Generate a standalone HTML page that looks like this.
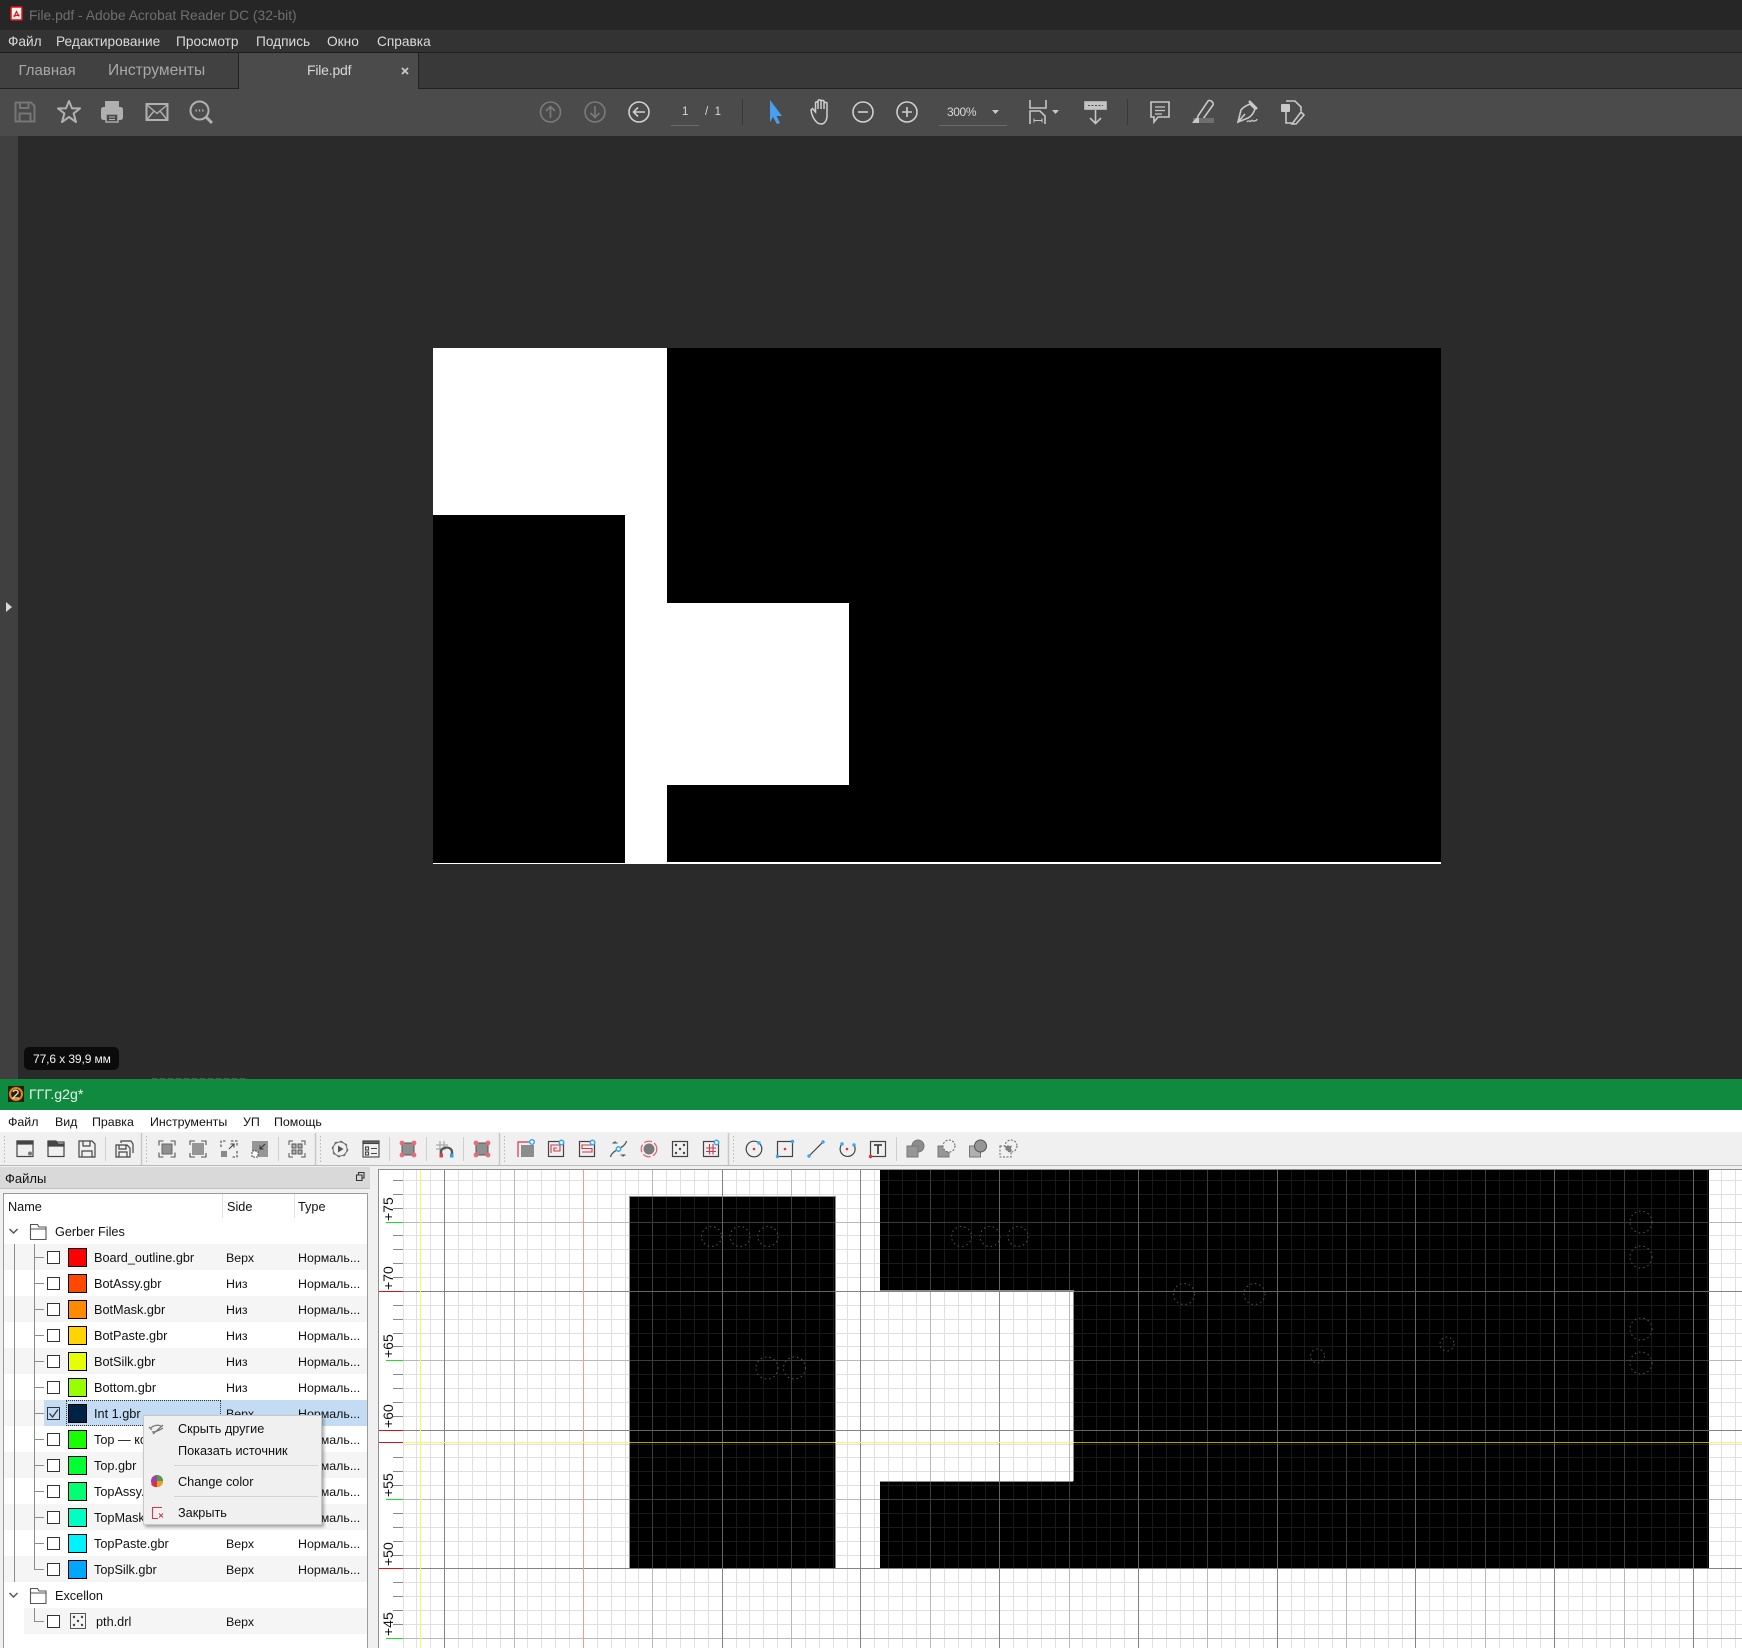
<!DOCTYPE html>
<html lang="ru"><head><meta charset="utf-8"><title>File.pdf</title>
<style>
html,body{margin:0;padding:0;background:#2a2a2a}
#p{position:relative;width:1742px;height:1648px;overflow:hidden;font-family:"Liberation Sans","Noto Sans CJK SC",sans-serif;background:#2a2a2a}
.b{position:absolute}
.t{position:absolute;white-space:nowrap;line-height:16px;height:16px;font-size:12.5px;color:#111}
.m{font-size:13.7px;color:#dadada}
.k{font-size:12.4px;color:#111}
.g{font-size:12.7px;color:#111}
svg{position:absolute;left:0;top:0}
</style></head><body><div id="p">
<!-- Acrobat chrome -->
<div class="b" style="left:0;top:0;width:1742px;height:30px;background:#262626"></div>
<div class="b" style="left:0;top:30px;width:1742px;height:22px;background:#333"></div>
<div class="b" style="left:0;top:52px;width:1742px;height:1px;background:#1e1e1e"></div>
<div class="b" style="left:0;top:53px;width:1742px;height:35px;background:#393939"></div>
<div class="b" style="left:0;top:53px;width:239px;height:35px;background:#414141"></div>
<div class="b" style="left:0;top:88px;width:1742px;height:1px;background:#222"></div>
<div class="b" style="left:0;top:89px;width:1742px;height:47px;background:#4b4b4b"></div>
<div class="b" style="left:238px;top:53px;width:181px;height:36px;background:#4b4b4b;border-left:1px solid #222;border-right:1px solid #222;box-sizing:border-box"></div>
<div class="b" style="left:0;top:136px;width:18px;height:943px;background:#404040"></div>
<!-- PDF page -->
<div class="b" style="left:433px;top:348px;width:1008px;height:516px;background:#fff"></div>
<div class="b" style="left:667px;top:348px;width:774px;height:255px;background:#000"></div>
<div class="b" style="left:849px;top:603px;width:592px;height:182px;background:#000"></div>
<div class="b" style="left:667px;top:785px;width:774px;height:77px;background:#000"></div>
<div class="b" style="left:433px;top:515px;width:192px;height:348px;background:#000"></div>
<!-- tooltip -->
<div class="b" style="left:24px;top:1047px;width:95px;height:23px;background:#0b0b0b;border-radius:5px"></div>
<div class="b" style="left:152px;top:1078px;width:96px;height:1px;background:repeating-linear-gradient(90deg,#555 0 5px,#333 5px 8px)"></div>
<!-- Lower app -->
<div class="b" style="left:0;top:1079px;width:1742px;height:31px;background:#0f8a3f"></div>
<div class="b" style="left:0;top:1110px;width:1742px;height:22px;background:#fff"></div>
<div class="b" style="left:0;top:1132px;width:1742px;height:516px;background:#f0f0f0"></div>
<div class="b" style="left:0;top:1165px;width:1742px;height:1px;background:#b9b9b9"></div>
<div class="b" style="left:0;top:1167px;width:370px;height:21px;background:#d9d9d9;border-bottom:1px solid #c4c4c4"></div>
<div class="b" style="left:3px;top:1193px;width:365px;height:455px;background:#fff;border:1px solid #9a9a9a;border-bottom:0;box-sizing:border-box"></div>
<!-- table rows -->
<div class="b" style="left:4px;top:1244px;width:363px;height:26px;background:#f5f5f5"></div>
<div class="b" style="left:4px;top:1296px;width:363px;height:26px;background:#f5f5f5"></div>
<div class="b" style="left:4px;top:1348px;width:363px;height:26px;background:#f5f5f5"></div>
<div class="b" style="left:4px;top:1400px;width:40px;height:26px;background:#f5f5f5"></div>
<div class="b" style="left:44px;top:1400px;width:323px;height:26px;background:#c4dcf3"></div>
<div class="b" style="left:66px;top:1400px;width:155px;height:26px;border:1px dotted #333;box-sizing:border-box"></div>
<div class="b" style="left:4px;top:1452px;width:363px;height:26px;background:#f5f5f5"></div>
<div class="b" style="left:4px;top:1504px;width:363px;height:26px;background:#f5f5f5"></div>
<div class="b" style="left:4px;top:1556px;width:363px;height:26px;background:#f5f5f5"></div>
<div class="b" style="left:24px;top:1608px;width:343px;height:26px;background:#f5f5f5"></div>

<svg width="1742" height="1648" viewBox="0 0 1742 1648" xmlns="http://www.w3.org/2000/svg">
<defs>
<path id="minor" d="M403.5 1170v478M416.5 1170v478M430.5 1170v478M444.5 1170v478M458.5 1170v478M472.5 1170v478M486.5 1170v478M500.5 1170v478M514.5 1170v478M527.5 1170v478M541.5 1170v478M555.5 1170v478M569.5 1170v478M583.5 1170v478M597.5 1170v478M611.5 1170v478M625.5 1170v478M638.5 1170v478M652.5 1170v478M666.5 1170v478M680.5 1170v478M694.5 1170v478M708.5 1170v478M722.5 1170v478M736.5 1170v478M749.5 1170v478M763.5 1170v478M777.5 1170v478M791.5 1170v478M805.5 1170v478M819.5 1170v478M833.5 1170v478M847.5 1170v478M860.5 1170v478M874.5 1170v478M888.5 1170v478M902.5 1170v478M916.5 1170v478M930.5 1170v478M944.5 1170v478M958.5 1170v478M971.5 1170v478M985.5 1170v478M999.5 1170v478M1013.5 1170v478M1027.5 1170v478M1041.5 1170v478M1055.5 1170v478M1069.5 1170v478M1082.5 1170v478M1096.5 1170v478M1110.5 1170v478M1124.5 1170v478M1138.5 1170v478M1152.5 1170v478M1166.5 1170v478M1180.5 1170v478M1193.5 1170v478M1207.5 1170v478M1221.5 1170v478M1235.5 1170v478M1249.5 1170v478M1263.5 1170v478M1277.5 1170v478M1291.5 1170v478M1304.5 1170v478M1318.5 1170v478M1332.5 1170v478M1346.5 1170v478M1360.5 1170v478M1374.5 1170v478M1388.5 1170v478M1402.5 1170v478M1415.5 1170v478M1429.5 1170v478M1443.5 1170v478M1457.5 1170v478M1471.5 1170v478M1485.5 1170v478M1499.5 1170v478M1513.5 1170v478M1526.5 1170v478M1540.5 1170v478M1554.5 1170v478M1568.5 1170v478M1582.5 1170v478M1596.5 1170v478M1610.5 1170v478M1624.5 1170v478M1637.5 1170v478M1651.5 1170v478M1665.5 1170v478M1679.5 1170v478M1693.5 1170v478M1707.5 1170v478M1721.5 1170v478M1735.5 1170v478M403 1180.5H1742M403 1194.5H1742M403 1208.5H1742M403 1222.5H1742M403 1235.5H1742M403 1249.5H1742M403 1263.5H1742M403 1277.5H1742M403 1291.5H1742M403 1305.5H1742M403 1319.5H1742M403 1333.5H1742M403 1346.5H1742M403 1360.5H1742M403 1374.5H1742M403 1388.5H1742M403 1402.5H1742M403 1416.5H1742M403 1430.5H1742M403 1444.5H1742M403 1457.5H1742M403 1471.5H1742M403 1485.5H1742M403 1499.5H1742M403 1513.5H1742M403 1527.5H1742M403 1541.5H1742M403 1555.5H1742M403 1568.5H1742M403 1582.5H1742M403 1596.5H1742M403 1610.5H1742M403 1624.5H1742M403 1638.5H1742"/>
<path id="med" d="M514.5 1170v478M652.5 1170v478M791.5 1170v478M930.5 1170v478M1069.5 1170v478M1207.5 1170v478M1346.5 1170v478M1485.5 1170v478M1624.5 1170v478M403 1222.5H1742M403 1360.5H1742M403 1499.5H1742M403 1638.5H1742"/>
<path id="dark" d="M444.5 1170v478M722.5 1170v478M860.5 1170v478M999.5 1170v478M1138.5 1170v478M1277.5 1170v478M1415.5 1170v478M1554.5 1170v478M1693.5 1170v478M403 1291.5H1742M403 1430.5H1742M403 1568.5H1742"/>
<clipPath id="blk"><path d="M630 1196H835V1568H630ZM880 1170H1709V1568H880V1481H1073V1290H880Z"/></clipPath>
</defs>

<!-- canvas -->
<rect x="379" y="1170" width="1363" height="478" fill="#fff"/>
<g shape-rendering="crispEdges" fill="none">
<use href="#minor" stroke="#e0e0e0"/>
<use href="#med" stroke="#bababa"/>
<use href="#dark" stroke="#838383"/>
<path d="M583.5 1170v478" stroke="#f19a9a"/>
<path d="M630 1196H835V1568H630ZM880 1170H1709V1568H880V1481H1073V1290H880Z" fill="#000"/>
<g clip-path="url(#blk)">
<use href="#minor" stroke="#191919"/>
<use href="#med" stroke="#3c3c3c"/>
<use href="#dark" stroke="#646464"/>
</g>
<path d="M630 1196.5H835M629.5 1196V1568M880 1290.5H1073.5V1481M1073 1481.5H880M835.5 1196V1568" stroke="#8c8c8c"/>
<path d="M420.5 1170V1648" stroke="#f8f85e"/>
<path d="M403 1442.5H1742" stroke="#f8f85e"/>
<path d="M630 1442.5H835M1074 1442.5H1709" stroke="#a8a800"/>
<path d="M378.5 1648V1169.5H1742" stroke="#8f8f8f"/>
<!-- ruler ticks -->
<path d="M393 1180.5h10M393 1194.5h10M393 1208.5h10M393 1235.5h10M393 1249.5h10M393 1263.5h10M393 1277.5h10M393 1305.5h10M393 1319.5h10M393 1333.5h10M393 1346.5h10M393 1374.5h10M393 1388.5h10M393 1402.5h10M393 1416.5h10M393 1457.5h10M393 1471.5h10M393 1485.5h10M393 1513.5h10M393 1527.5h10M393 1541.5h10M393 1555.5h10M393 1582.5h10M393 1596.5h10M393 1610.5h10M393 1624.5h10" stroke="#8a8a8a"/>
<path d="M386 1222.5h17M386 1360.5h17M386 1499.5h17M386 1638.5h17" stroke="#1ee01e"/>
<path d="M379 1291.5h24M379 1430.5h24M379 1442.5h24M379 1568.5h24" stroke="#e01010"/>
</g>
<g font-family="Liberation Sans,sans-serif" font-size="14" fill="#111">
<text transform="translate(393,1221) rotate(-90)">+75</text>
<text transform="translate(393,1290) rotate(-90)">+70</text>
<text transform="translate(393,1358) rotate(-90)">+65</text>
<text transform="translate(393,1428) rotate(-90)">+60</text>
<text transform="translate(393,1497) rotate(-90)">+55</text>
<text transform="translate(393,1566) rotate(-90)">+50</text>
<text transform="translate(393,1636) rotate(-90)">+45</text>
</g>
<!-- holes -->
<g fill="none" stroke="#555" stroke-dasharray="1.5 3">
<circle cx="711.5" cy="1236.5" r="10"/><circle cx="740" cy="1236.5" r="10"/><circle cx="768" cy="1236.5" r="10"/>
<circle cx="767" cy="1368" r="11"/><circle cx="794.5" cy="1368" r="11"/>
<circle cx="961.5" cy="1236.5" r="10"/><circle cx="990" cy="1236.5" r="10"/><circle cx="1018" cy="1236.5" r="10"/>
<circle cx="1184" cy="1294" r="10.5"/><circle cx="1254.5" cy="1294" r="10.5"/>
<circle cx="1317.5" cy="1356" r="7"/><circle cx="1447" cy="1344" r="7"/>
<circle cx="1641" cy="1222" r="11"/><circle cx="1641" cy="1257" r="11"/><circle cx="1641" cy="1329" r="11"/><circle cx="1641" cy="1363" r="11"/>
</g>

<!-- acrobat title icon -->
<rect x="11" y="7" width="11" height="13" rx="1" fill="#f5f5f5" stroke="#e81010" stroke-width="1.5"/>
<path d="M14 17L16.5 11.500L19 16.500M13.500 16l6-1" fill="none" stroke="#e81010" stroke-width="1.200"/>
<!-- close -->
<path d="M402 68l6 6M408 68l-6 6" stroke="#c8c8c8" stroke-width="1.8"/>
<!-- acrobat left tools -->
<g fill="none" stroke="#767676" stroke-width="2" transform="translate(25,112)">
<path d="M-10-9.5H6L9.5-6V9.5H-9.5V-9.5Z"/><path d="M-5-9V-4H3.5V-9M-5.5 9V1.5H5.5V9"/>
</g>
<g fill="none" stroke="#b0b0b0" stroke-width="2" transform="translate(69,112)">
<path d="M0-11L3-3.6H11L4.6 1.4L7 10L0 5L-7 10L-4.6 1.4L-11-3.6H-3Z" stroke-linejoin="round"/>
</g>
<g transform="translate(112,112)">
<path d="M-7-11H7V-4H-7Z" fill="#b0b0b0"/><rect x="-11" y="-5" width="22" height="13" rx="2.5" fill="#b0b0b0"/><rect x="-6" y="2" width="12" height="8" fill="#4b4b4b" stroke="#b0b0b0" stroke-width="1.4"/><path d="M-3 5h6M-3 7.5h6" stroke="#b0b0b0"/>
</g>
<g fill="none" stroke="#b0b0b0" stroke-width="2" transform="translate(157,112)">
<rect x="-10.5" y="-8" width="21" height="16"/><path d="M-10-7L0 1.5L10-7M-10 7.5L-3-1M10 7.5L3-1" stroke-width="1.4"/>
</g>
<g fill="none" stroke="#b0b0b0" transform="translate(201,112)">
<circle cx="-1.5" cy="-1.5" r="9" stroke-width="2"/><path d="M5 5L11 11" stroke-width="3"/><path d="M-5.5-1.5h1.400M-2.200-1.5h1.400M1.100-1.5h1.400" stroke-width="2"/>
</g>
<!-- nav -->
<g fill="none" stroke="#7a7a7a" stroke-width="1.6">
<g transform="translate(550.5,112)"><circle r="10"/><path d="M0 6V-5M-4.5-1L0-5.5L4.5-1"/></g>
<g transform="translate(595,112)"><circle r="10"/><path d="M0-6V5M-4.5 1L0 5.5L4.5 1"/></g>
</g>
<g fill="none" stroke="#d0d0d0" stroke-width="1.6">
<g transform="translate(639,112)"><circle r="10"/><path d="M6 0H-5M-1-4.5L-5.5 0L-1 4.5"/></g>
<g transform="translate(863,112)"><circle r="10"/><path d="M-5 0H5"/></g>
<g transform="translate(907,112)"><circle r="10"/><path d="M-5 0H5M0-5V5"/></g>
</g>
<path d="M671 125.5h28M939 125.5h68" stroke="#6a6a6a"/>
<path d="M742.5 99V125M1127.5 99V125" stroke="#383838"/>
<path d="M770 100L782 116H776.5L780 123L777 124L773 117L770 122Z" fill="#46a0f0"/>
<g transform="translate(2.500,0)"><path d="M814 122C810 118 809 114 808.5 110L810 108.5L813 112V103C813 101.5 815.5 101.5 815.5 103V109V101C815.5 99.500 818.500 99.500 818.500 101V109V101.500C818.500 100 821.500 100 821.500 101.500V109V103.500C821.500 102 824.500 102 824.500 103.500V116C824.500 119 823 122 821 123.500C818 124.500 816 124 814 122Z" fill="none" stroke="#d0d0d0" stroke-width="1.500"/></g>
<path d="M992 110h7l-3.500 4Z" fill="#c8c8c8"/>
<!-- fit -->
<g fill="none" stroke="#c4c4c4" stroke-width="1.6">
<path d="M1030 100V108H1046V100"/><path d="M1030 124V111H1040L1045 116V124"/><path d="M1034 120.500H1042M1034 118.500V122.500M1042 118.500V122.500" stroke-width="1"/>
</g>
<path d="M1052 110h7l-3.500 4Z" fill="#c8c8c8"/>
<g fill="none" stroke="#c4c4c4" stroke-width="1.6">
<rect x="1085" y="102" width="21" height="7" fill="#c4c4c4"/><path d="M1095.500 110V123M1090 118L1095.500 123.500L1101 118"/>
</g>
<path d="M1088 105.500h15" stroke="#4b4b4b" stroke-dasharray="2 1.500"/>
<!-- comment -->
<path d="M1151 102H1169V117H1158L1154 122V117H1151Z" fill="none" stroke="#c8c8c8" stroke-width="1.6"/>
<path d="M1155 107h10M1155 110.500h10M1155 114h7" stroke="#c8c8c8" stroke-width="1.300"/>
<!-- highlight -->
<path d="M1198 116L1208 101C1210 99.500 1214 102 1213 105L1203 119L1197 120Z" fill="none" stroke="#c8c8c8" stroke-width="1.600"/>
<rect x="1193" y="118" width="21" height="5" fill="#6e6e6e"/><path d="M1192 123l4-5h3v5Z" fill="#c8c8c8"/>
<!-- sign -->
<path d="M1238 122L1241 110C1244 106 1248 105 1250 104L1255 109C1254 112 1252 116 1248 118ZM1238 122L1245 114" fill="none" stroke="#c8c8c8" stroke-width="1.600"/>
<path d="M1249 101L1257 109" stroke="#c8c8c8" stroke-width="2.500"/><path d="M1247 122c2-3 3 1 4-1s2 1 3 0s2 1 3-2" fill="none" stroke="#c8c8c8" stroke-width="1.300"/>
<!-- share -->
<path d="M1286 101H1295L1301 107V111M1286 112V123H1292" fill="none" stroke="#c8c8c8" stroke-width="1.600"/>
<rect x="1281" y="104" width="9" height="8" rx="1" fill="#c8c8c8"/>
<path d="M1292 124L1301 112L1304 115L1296 124Z" fill="none" stroke="#c8c8c8" stroke-width="1.600"/>
<!-- sidebar arrow -->
<path d="M6 602l6 5l-6 5Z" fill="#d8d8d8"/>

<!-- g2g icon -->
<rect x="8" y="1086" width="16" height="16" fill="#2a1d08"/>
<circle cx="16" cy="1094" r="6" fill="none" stroke="#e08a1e" stroke-width="2"/><path d="M13 1092c1-3 6-2 5 1l-5 5h6" fill="none" stroke="#e8e0c0" stroke-width="1.300"/>

<!-- grips & separators in qt toolbar -->
<g fill="none" stroke="#b8b8b8" stroke-dasharray="1.500 2">
<path d="M4.500 1136V1162M146.500 1136V1162M320.500 1136V1162M504.500 1136V1162M733.500 1136V1162"/>
</g>
<path d="M141.500 1133V1165M315.500 1133V1165M499.500 1133V1165M728.500 1133V1165" stroke="#c8c8c8" stroke-width="1.500"/>
<path d="M105.500 1137V1161M278.500 1137V1161M389.500 1137V1161M426.500 1137V1161M463.500 1137V1161M896.500 1137V1161" stroke="#d0d0d0"/>

<g fill="none" stroke="#444" stroke-width="1.200">
<!-- new -->
<g transform="translate(25,1149)"><rect x="-8" y="-8" width="16" height="15.500"/><rect x="-8" y="-8" width="16" height="3" fill="#444"/><circle cx="5" cy="4.500" r="2" fill="#777" stroke="none"/></g>
<!-- open -->
<g transform="translate(56,1149)"><rect x="-8" y="-7" width="16" height="14.500"/><path d="M-8-4V-8H0L2-5H8V-3H-8Z" fill="#444"/></g>
<!-- save -->
<g transform="translate(87,1149)"><path d="M-8-8H5L8-5V8H-8Z"/><path d="M-4-8V-3H3V-8M-5 8V2H5V8"/></g>
<!-- save all -->
<g transform="translate(124,1149)"><path d="M-8-4H3L6-1V8H-8Z"/><path d="M-5-4V0H2V-4M-5 8V3H3V8"/><path d="M-3-6V-8H7L9-5V4" /></g>
</g>
<!-- zoom group -->
<g transform="translate(167,1149)"><rect x="-5" y="-5" width="10" height="10" fill="#909090" stroke="#666"/><path d="M-8-3.500V-8H-3.500M3.500-8H8V-3.500M8 3.500V8H3.500M-3.500 8H-8V3.500" fill="none" stroke="#555" stroke-width="1.100"/></g>
<g transform="translate(198,1149)"><rect x="-6" y="-6" width="12" height="12" fill="#969696"/><path d="M-8-4V-8H-3M3-8H8V-4M8 4V8H3M-3 8H-8V4" fill="none" stroke="#555" stroke-width="1.100"/></g>
<g transform="translate(229,1149)"><rect x="-8" y="2" width="6" height="6" fill="#8a8a8a"/><path d="M-8-2V-8H-2M2-8H8V-2M8 2V8H2" fill="none" stroke="#444" stroke-width="1.100" stroke-dasharray="2.500 1.500"/><path d="M0 0L5-5M1.500-5H5V-1.500" fill="none" stroke="#444" stroke-width="1.100"/></g>
<g transform="translate(260,1149)"><rect x="-8" y="-8" width="16" height="16" fill="#969696"/><rect x="-8" y="2" width="6" height="6" fill="#fff" stroke="#444" stroke-dasharray="2 1"/><path d="M5-5L0 0M0-3.500V0H3.500" fill="none" stroke="#333" stroke-width="1.100"/></g>
<g transform="translate(297,1149)" fill="none" stroke="#555" stroke-width="1"><rect x="-5" y="-5" width="4" height="4" fill="#b0b0b0"/><rect x="1" y="-5" width="4" height="4" fill="#b0b0b0"/><rect x="-5" y="1" width="4" height="4" fill="#b0b0b0"/><rect x="1" y="1" width="4" height="4" fill="#b0b0b0"/><path d="M-8-4V-8H-4M4-8H8V-4M8 4V8H4M-4 8H-8V4"/></g>
<g transform="translate(340,1149)"><circle r="7" fill="none" stroke="#666" stroke-width="1"/><circle r="7.800" fill="none" stroke="#666" stroke-width="1" stroke-dasharray="2.500 3.600"/><path d="M-2-3.500L3.500 0L-2 3.500Z" fill="#555"/></g>
<g transform="translate(371,1149)" fill="none" stroke="#444" stroke-width="1.100"><rect x="-8" y="-8" width="16" height="16"/><rect x="-8" y="-8" width="16" height="2.500" fill="#666"/><rect x="-5.500" y="-2" width="3" height="3"/><rect x="-5.500" y="3" width="3" height="3"/><path d="M0-.5H6M0 4.500H6"/></g>
<g id="rc" transform="translate(408,1149)"><rect x="-6" y="-6" width="12" height="12" fill="#909090" stroke="#555"/><circle cx="-6" cy="-6" r="2.400" fill="#e86a7c"/><circle cx="6" cy="-6" r="2.400" fill="#e86a7c"/><circle cx="-6" cy="6" r="2.400" fill="#e86a7c"/><circle cx="6" cy="6" r="2.400" fill="#e86a7c"/></g>
<g transform="translate(445,1149)"><path d="M-9-4H3M-9 0H1M-5-8V6M-1-8V1" stroke="#999" fill="none"/><path d="M-4 8V3C-4-3 7-3 7 3V8" fill="none" stroke="#555" stroke-width="2.300"/><rect x="-5.500" y="4.500" width="3.500" height="4" fill="#e0404a"/><rect x="5" y="4.500" width="3.500" height="4" fill="#3aa0e0"/></g>
<g transform="translate(482,1149)"><rect x="-6" y="-6" width="12" height="12" fill="#909090" stroke="#555"/><circle cx="-6" cy="-6" r="2.400" fill="#e86a7c"/><circle cx="6" cy="-6" r="2.400" fill="#e86a7c"/><circle cx="-6" cy="6" r="2.400" fill="#e86a7c"/><circle cx="6" cy="6" r="2.400" fill="#e86a7c"/></g>

<!-- copper tools -->
<g transform="translate(526,1149)"><path d="M-8 8V-7H6" fill="none" stroke="#d8344a" stroke-width="1.200"/><rect x="-5" y="-4" width="13" height="12" fill="#8c8c8c"/><circle cx="6" cy="-7" r="2.300" fill="#fff" stroke="#39a8e8" stroke-width="1.500"/></g>
<g transform="translate(556,1149)" fill="none"><rect x="-7.500" y="-7.500" width="15" height="15" stroke="#444" stroke-width="1.200"/><path d="M-5 4V-4H4V2H-2V-1H1" stroke="#d8344a" stroke-width="1.100"/><circle cx="5.500" cy="-6.500" r="2.200" fill="#fff" stroke="#39a8e8" stroke-width="1.500"/></g>
<g transform="translate(587,1149)" fill="none"><rect x="-7.500" y="-7.500" width="15" height="15" stroke="#444" stroke-width="1.200"/><path d="M5-4H-5V-.5H5V3H-5" stroke="#d8344a" stroke-width="1.100"/><circle cx="5.500" cy="-6.500" r="2.200" fill="#fff" stroke="#39a8e8" stroke-width="1.500"/></g>
<g transform="translate(618.500,1149)" fill="none"><path d="M-8 8C-6 0 6 0 8-8" stroke="#555" stroke-width="1.300"/><path d="M-6-6H-1M2 6H7M-5-6l2-1.500M6 6l-2 1.500" stroke="#444"/><circle r="2.200" fill="#fff" stroke="#39a8e8" stroke-width="1.500"/></g>
<g transform="translate(649,1149)" fill="none"><circle r="5.500" fill="#7a7a7a"/><circle r="7.800" stroke="#e25a6a" stroke-width="1.200" stroke-dasharray="8 2.500"/></g>
<g transform="translate(680,1149)"><rect x="-7.500" y="-7.500" width="15" height="15" fill="none" stroke="#444" stroke-width="1.200"/><g fill="#444"><circle cx="-4" cy="-4" r="1.200"/><circle cx="4" cy="-4" r="1.200"/><circle r="1.200"/><circle cx="-4" cy="4" r="1.200"/><circle cx="4" cy="4" r="1.200"/></g></g>
<g transform="translate(711,1149)" fill="none"><rect x="-7.500" y="-7.500" width="15" height="15" stroke="#444" stroke-width="1.200"/><path d="M-5-1H5M-5 2.500H5M-1.500-5V5.500M2-5V5.500" stroke="#d8344a" stroke-width="1.100"/><circle cx="5.500" cy="-6.500" r="2.200" fill="#fff" stroke="#39a8e8" stroke-width="1.500"/></g>
<!-- draw -->
<g transform="translate(754,1149)" fill="none"><circle r="7.800" stroke="#444" stroke-width="1.200"/><circle r="1.300" fill="#e03040"/><circle cx="5" cy="-6" r="1.700" fill="#39a8e8"/></g>
<g transform="translate(785,1149)" fill="none"><rect x="-7.500" y="-7.500" width="15" height="15" stroke="#444" stroke-width="1.200"/><circle r="1.300" fill="#e03040"/><circle cx="7.500" cy="-7.500" r="1.700" fill="#39a8e8"/><circle cx="-7.500" cy="7.500" r="1.700" fill="#39a8e8"/></g>
<g transform="translate(816,1149)"><path d="M-7 7L7-7" stroke="#444" stroke-width="1.200"/><circle cx="-7" cy="7" r="1.700" fill="#39a8e8"/><circle cx="7" cy="-7" r="1.700" fill="#39a8e8"/></g>
<g transform="translate(847,1149)" fill="none"><path d="M-5-5A7.500 7.500 0 1 0 7-4" stroke="#444" stroke-width="1.200"/><circle r="1.300" fill="#e03040"/><circle cx="-5" cy="-5" r="1.700" fill="#39a8e8"/><circle cx="7" cy="-4" r="1.700" fill="#39a8e8"/></g>
<g transform="translate(878,1149)" fill="none"><rect x="-7.500" y="-7.500" width="15" height="15" stroke="#444" stroke-width="1.200"/><path d="M-4-4H4M0-4V5" stroke="#444" stroke-width="1.800"/><circle cx="-7.500" cy="7.500" r="1.700" fill="#e03040"/></g>
<g transform="translate(915,1149)"><circle cx="3" cy="-3" r="6" fill="#8c8c8c" stroke="#777"/><rect x="-8" y="-3" width="11" height="11" fill="#969696" stroke="#777"/></g>
<g transform="translate(946,1149)"><rect x="-8" y="-3" width="11" height="11" fill="#969696" stroke="#777"/><circle cx="3" cy="-3" r="6" fill="#f0f0f0" stroke="#666" stroke-dasharray="2 1.500"/></g>
<g transform="translate(977.500,1149)"><rect x="-8" y="-3" width="11" height="11" fill="#b0b0b0" stroke="#777"/><circle cx="3" cy="-3" r="6" fill="#969696" stroke="#555"/></g>
<g transform="translate(1008,1149)"><rect x="-8" y="-3" width="11" height="11" fill="none" stroke="#666" stroke-dasharray="2 1.500"/><circle cx="3" cy="-3" r="6" fill="none" stroke="#666" stroke-dasharray="2 1.500"/><path d="M-3-3H3V3A6 6 0 0 1-3-3" fill="#808080"/></g>

<!-- files float icon -->
<path d="M356.500 1180.500h5.500v-5.500h-5.500ZM358.500 1175v-2.500h5.500v5.500h-2" fill="none" stroke="#333" stroke-width="1.100"/>

<!-- table header separators -->
<path d="M222.500 1194V1218M294.500 1194V1218" stroke="#e2e2e2"/>
<!-- tree -->
<path d="M14.500 1244V1582M34.500 1244V1569.500H44M34.500 1257.500H44M34.500 1283.500H44M34.500 1309.500H44M34.500 1335.500H44M34.500 1361.500H44M34.500 1387.500H44M34.500 1413.500H44M34.500 1439.500H44M34.500 1465.500H44M34.500 1491.500H44M34.500 1517.500H44M34.500 1543.500H44M34.500 1608V1621.500H44" fill="none" stroke="#8c8c8c"/>
<!-- chevrons + folders -->
<path d="M9.500 1229L13.500 1233L17.500 1229M9.500 1593L13.500 1597L17.500 1593" fill="none" stroke="#555" stroke-width="1.500"/>
<g fill="none" stroke="#555" stroke-width="1.100">
<path d="M30.500 1239.500V1224.500H37.500L39 1227H46V1239.500ZM30.500 1229H46"/>
<path d="M30.500 1603.500V1588.500H37.500L39 1591H46V1603.500ZM30.500 1593H46"/>
</g>
<!-- check boxes -->
<g fill="#fff" stroke="#333" stroke-width="1">
<rect x="47.500" y="1251.500" width="12" height="12"/><rect x="47.500" y="1277.500" width="12" height="12"/><rect x="47.500" y="1303.500" width="12" height="12"/><rect x="47.500" y="1329.500" width="12" height="12"/><rect x="47.500" y="1355.500" width="12" height="12"/><rect x="47.500" y="1381.500" width="12" height="12"/><rect x="47.500" y="1407.500" width="12" height="12" fill="#c4dcf3"/><rect x="47.500" y="1433.500" width="12" height="12"/><rect x="47.500" y="1459.500" width="12" height="12"/><rect x="47.500" y="1485.500" width="12" height="12"/><rect x="47.500" y="1511.500" width="12" height="12"/><rect x="47.500" y="1537.500" width="12" height="12"/><rect x="47.500" y="1563.500" width="12" height="12"/><rect x="47.500" y="1615.500" width="12" height="12"/>
</g>
<path d="M49.500 1413.500L52.500 1417L58 1409.500" fill="none" stroke="#333" stroke-width="1.300"/>
<!-- swatches -->
<g stroke="#000" stroke-width="1">
<rect x="68.500" y="1248.500" width="18" height="18" fill="#ff0000"/>
<rect x="68.500" y="1274.500" width="18" height="18" fill="#ff4800"/>
<rect x="68.500" y="1300.500" width="18" height="18" fill="#ff8c00"/>
<rect x="68.500" y="1326.500" width="18" height="18" fill="#ffd400"/>
<rect x="68.500" y="1352.500" width="18" height="18" fill="#e6ff00"/>
<rect x="68.500" y="1378.500" width="18" height="18" fill="#99ff00"/>
<rect x="68.500" y="1404.500" width="18" height="18" fill="#002244"/>
<rect x="68.500" y="1430.500" width="18" height="18" fill="#19ff00"/>
<rect x="68.500" y="1456.500" width="18" height="18" fill="#00ff33"/>
<rect x="68.500" y="1482.500" width="18" height="18" fill="#00ff73"/>
<rect x="68.500" y="1508.500" width="18" height="18" fill="#00ffc3"/>
<rect x="68.500" y="1534.500" width="18" height="18" fill="#00f2ff"/>
<rect x="68.500" y="1560.500" width="18" height="18" fill="#00a6ff"/>
</g>
<rect x="70.500" y="1613.500" width="15" height="15" fill="#f4f4f4" stroke="#555"/>
<g fill="#444"><circle cx="74" cy="1617" r="1.200"/><circle cx="82" cy="1617" r="1.200"/><circle cx="78" cy="1621" r="1.200"/><circle cx="74" cy="1625" r="1.200"/><circle cx="82" cy="1625" r="1.200"/></g>
</svg>

<!-- Acrobat text -->
<span class="t" style="left:29px;top:8px;font-size:13.8px;color:#6f6f6f">File.pdf - Adobe Acrobat Reader DC (32-bit)</span>
<span class="t m" style="left:8px;top:34px">Файл</span>
<span class="t m" style="left:56px;top:34px">Редактирование</span>
<span class="t m" style="left:176px;top:34px">Просмотр</span>
<span class="t m" style="left:256px;top:34px">Подпись</span>
<span class="t m" style="left:327px;top:34px">Окно</span>
<span class="t m" style="left:377px;top:34px">Справка</span>
<span class="t" style="left:18.500px;top:63px;font-size:15px;color:#a8a8a8">Главная</span>
<span class="t" style="left:108px;top:63px;font-size:15.6px;color:#a8a8a8">Инструменты</span>
<span class="t" style="left:307px;top:62px;font-size:14px;color:#d8d8d8;letter-spacing:-.2px">File.pdf</span>
<span class="t" style="left:682px;top:104px;font-size:11.5px;color:#d8d8d8">1</span>
<span class="t" style="left:705px;top:104px;font-size:11.5px;color:#d8d8d8">/&nbsp; 1</span>
<span class="t" style="left:947px;top:104px;font-size:12px;color:#d8d8d8;letter-spacing:-.4px">300%</span>
<span class="t" style="left:33px;top:1051px;font-size:12px;color:#f4f4f4;letter-spacing:-.1px">77,6 x 39,9 мм</span>

<!-- Lower text -->
<span class="t" style="left:29px;top:1087px;font-size:14.200px;color:#e9f3ec">ГГГ.g2g*</span>
<span class="t k" style="left:8px;top:1114px">Файл</span>
<span class="t k" style="left:55px;top:1114px">Вид</span>
<span class="t k" style="left:92px;top:1114px">Правка</span>
<span class="t k" style="left:150px;top:1114px">Инструменты</span>
<span class="t k" style="left:243px;top:1114px">УП</span>
<span class="t k" style="left:274px;top:1114px">Помощь</span>
<span class="t" style="left:5px;top:1171px;font-size:13px">Файлы</span>
<span class="t g" style="left:8px;top:1199px">Name</span>
<span class="t g" style="left:227px;top:1199px">Side</span>
<span class="t g" style="left:298px;top:1199px">Type</span>
<span class="t g" style="left:55px;top:1224px">Gerber Files</span>
<span class="t g" style="left:94px;top:1250px">Board_outline.gbr</span><span class="t k" style="left:226px;top:1250px">Верх</span><span class="t k" style="left:298px;top:1250px">Нормаль...</span>
<span class="t g" style="left:94px;top:1276px">BotAssy.gbr</span><span class="t k" style="left:226px;top:1276px">Низ</span><span class="t k" style="left:298px;top:1276px">Нормаль...</span>
<span class="t g" style="left:94px;top:1302px">BotMask.gbr</span><span class="t k" style="left:226px;top:1302px">Низ</span><span class="t k" style="left:298px;top:1302px">Нормаль...</span>
<span class="t g" style="left:94px;top:1328px">BotPaste.gbr</span><span class="t k" style="left:226px;top:1328px">Низ</span><span class="t k" style="left:298px;top:1328px">Нормаль...</span>
<span class="t g" style="left:94px;top:1354px">BotSilk.gbr</span><span class="t k" style="left:226px;top:1354px">Низ</span><span class="t k" style="left:298px;top:1354px">Нормаль...</span>
<span class="t g" style="left:94px;top:1380px">Bottom.gbr</span><span class="t k" style="left:226px;top:1380px">Низ</span><span class="t k" style="left:298px;top:1380px">Нормаль...</span>
<span class="t g" style="left:94px;top:1406px">Int 1.gbr</span><span class="t k" style="left:226px;top:1406px">Верх</span><span class="t k" style="left:298px;top:1406px">Нормаль...</span>
<span class="t g" style="left:94px;top:1432px">Top — копия.gbr</span><span class="t k" style="left:298px;top:1432px">Нормаль...</span>
<span class="t g" style="left:94px;top:1458px">Top.gbr</span><span class="t k" style="left:298px;top:1458px">Нормаль...</span>
<span class="t g" style="left:94px;top:1484px">TopAssy.gbr</span><span class="t k" style="left:298px;top:1484px">Нормаль...</span>
<span class="t g" style="left:94px;top:1510px">TopMask.gbr</span><span class="t k" style="left:298px;top:1510px">Нормаль...</span>
<span class="t g" style="left:94px;top:1536px">TopPaste.gbr</span><span class="t k" style="left:226px;top:1536px">Верх</span><span class="t k" style="left:298px;top:1536px">Нормаль...</span>
<span class="t g" style="left:94px;top:1562px">TopSilk.gbr</span><span class="t k" style="left:226px;top:1562px">Верх</span><span class="t k" style="left:298px;top:1562px">Нормаль...</span>
<span class="t g" style="left:55px;top:1588px">Excellon</span>
<span class="t g" style="left:96px;top:1614px">pth.drl</span><span class="t k" style="left:226px;top:1614px">Верх</span>

<!-- context menu -->
<div class="b" style="left:143px;top:1415px;width:179px;height:110px;background:#f0f0f0;border:1px solid #c8c8c8;box-sizing:border-box;box-shadow:2px 2px 3px rgba(0,0,0,.35)"></div>
<svg width="1742" height="1648" viewBox="0 0 1742 1648" xmlns="http://www.w3.org/2000/svg">
<path d="M174 1465.500H318M174 1496.500H318" stroke="#d4d4d4"/>
<path d="M150 1429c3-4 9-5 12-2M152 1432c4 0 8-2 11-4M153 1434l10-9M149 1427l3 3" fill="none" stroke="#777" stroke-width="1.200"/>
<circle cx="157" cy="1481" r="6" fill="#a040a0"/><path d="M157 1475a6 6 0 0 1 6 6h-6Z" fill="#4aa050"/><path d="M157 1481h6a6 6 0 0 1-6 6Z" fill="#e8a020"/><path d="M157 1481v6a6 6 0 0 1-6-3Z" fill="#e03040"/>
<path d="M162 1507.500H152.500V1518.500H158" fill="none" stroke="#d8344a" stroke-width="1.100"/><path d="M159 1513.500l4 4M163 1513.500l-4 4" stroke="#d8344a"/>
</svg>
<span class="t g" style="left:178px;top:1421px">Скрыть другие</span>
<span class="t g" style="left:178px;top:1443px">Показать источник</span>
<span class="t g" style="left:178px;top:1474px">Change color</span>
<span class="t g" style="left:178px;top:1505px">Закрыть</span>
</div></body></html>
